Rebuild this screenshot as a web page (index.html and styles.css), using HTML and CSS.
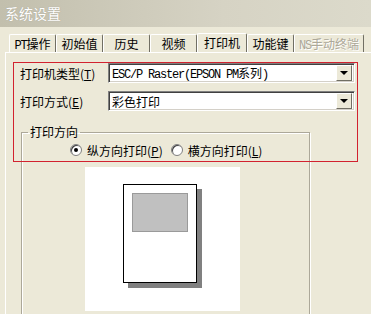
FILE: index.html
```html
<!DOCTYPE html>
<html lang="zh-CN">
<head>
    <meta charset="UTF-8">
    <title>系统设置</title>
    <link rel="stylesheet" href="styles.css">
</head>
<body>
    <div class="titlebar">系统设置</div>

    <div class="tabs">
        <div class="tab"><span class="latin">PT</span>操作</div>
        <div class="tab">初始值</div>
        <div class="tab">历史</div>
        <div class="tab">视频</div>
        <div class="tab active">打印机</div>
        <div class="tab">功能键</div>
        <div class="tab disabled"><span class="latin">NS</span>手动终端</div>
    </div>

    <div class="panel">
        <div class="row">
            <label>打印机类型(<u>T</u>)</label>
            <div class="combo">
                <span class="value"><span class="latin">ESC/P Raster(EPSON PM</span>系列<span class="latin">)</span></span>
                <span class="drop"><i></i></span>
            </div>
        </div>
        <div class="row">
            <label>打印方式(<u>E</u>)</label>
            <div class="combo">
                <span class="value">彩色打印</span>
                <span class="drop"><i></i></span>
            </div>
        </div>

        <fieldset class="group">
            <legend>打印方向</legend>
            <div class="radios">
                <span class="radio checked"></span>
                <span class="radio-label">纵方向打印(<u>P</u>)</span>
                <span class="radio"></span>
                <span class="radio-label">横方向打印(<u>L</u>)</span>
            </div>
            <div class="preview">
                <div class="paper">
                    <div class="image"></div>
                </div>
            </div>
        </fieldset>
    </div>

    <!-- annotation box -->
    <div class="mark"></div>
</body>
</html>
```

FILE: styles.css
```css
body {
    margin: 0;
    width: 371px;
    height: 314px;
    overflow: hidden;
    background: #ece9d8;
    font-family: "Noto Sans CJK SC", sans-serif;
    font-size: 12px;
    color: #000;
    position: relative;
}
.latin {
    font-family: "Liberation Mono", monospace;
    letter-spacing: -1.2px;
}
.titlebar {
    height: 27px;
    line-height: 26px;
    padding-left: 5px;
    font-size: 14px;
    color: #fff;
    text-shadow: 0 0 1px #9a978a;
    background: linear-gradient(to right, #c2bfad, #d6d3c4 60%, #dcdacb);
}
.tabs {
    display: flex;
    margin-top: 7px;
    padding-left: 9px;
    height: 18px;
    white-space: nowrap;
}
.tab {
    flex: none;
    box-sizing: border-box;
    min-width: 47px;
    padding: 0 4px;
    text-align: center;
    line-height: 17px;
    border-top: 1px solid #fff;
    border-left: 1px solid #fff;
    border-right: 1px solid #716f64;
    border-radius: 2px 2px 0 0;
}
.tab.active {
    margin-top: -1px;
    height: 19px;
    min-width: 50px;
}
.tab.disabled {
    color: #aca899;
    text-shadow: 1px 1px 0 #fff;
}
.panel {
    margin-left: 5px;
    border-top: 1px solid #fff;
    border-left: 1px solid #fff;
    padding-top: 10px;
    height: 251px;
    overflow: hidden;
}
.row {
    display: flex;
    align-items: center;
    height: 20px;
    padding-left: 14px;
    margin-bottom: 8px;
    white-space: nowrap;
}
.row label {
    width: 88px;
}
.combo {
    width: 247px;
    height: 20px;
    box-sizing: border-box;
    display: flex;
    align-items: center;
    background: #fff;
    border-top: 1px solid #808080;
    border-left: 1px solid #808080;
    border-right: 1px solid #fff;
    border-bottom: 1px solid #fff;
    box-shadow: inset 1px 1px 0 #404040, inset -1px -1px 0 #d4d0c8;
}
.combo .value {
    flex: 1;
    padding-left: 3px;
}
.drop {
    width: 16px;
    height: 16px;
    margin-right: 2px;
    box-sizing: border-box;
    display: flex;
    align-items: center;
    justify-content: center;
    background: #ece9d8;
    border-top: 1px solid #fff;
    border-left: 1px solid #fff;
    border-right: 1px solid #716f64;
    border-bottom: 1px solid #716f64;
}
.drop i {
    width: 0;
    height: 0;
    border-left: 4px solid transparent;
    border-right: 4px solid transparent;
    border-top: 4px solid #000;
}
.group {
    margin: 14px 0 0 15px;
    padding: 0;
    width: 287px;
    height: 260px;
    border: 1px solid #aca899;
    box-shadow: 1px 1px 0 #fff, inset 1px 1px 0 #fff;
}
.group legend {
    margin-left: 6px;
    padding: 0 2px;
    line-height: 14px;
}
.radios {
    display: flex;
    align-items: center;
    height: 14px;
    margin-top: 4px;
    padding-left: 48px;
    white-space: nowrap;
}
.radio {
    width: 12px;
    height: 12px;
    box-sizing: border-box;
    border-radius: 50%;
    background: #fff;
    border: 1px solid #808080;
    box-shadow: inset 1px 1px 0 #404040;
    display: flex;
    align-items: center;
    justify-content: center;
}
.radio.checked::after {
    content: "";
    width: 4px;
    height: 4px;
    border-radius: 50%;
    background: #000;
}
.radio-label {
    margin: 0 8px 0 5px;
}
.preview {
    width: 155px;
    height: 144px;
    margin: 10px 0 0 63px;
    background: #fff;
    padding: 17px 0 0 38px;
    box-sizing: border-box;
}
.paper {
    width: 74px;
    height: 99px;
    box-sizing: border-box;
    border: 1px solid #000;
    background: #fff;
    box-shadow: 5px 5px 0 #808080;
    padding: 8px 0 0 8px;
}
.image {
    width: 56px;
    height: 39px;
    box-sizing: border-box;
    background: #c0c0c0;
    border: 1px solid #9a9a9a;
}
.mark {
    position: absolute;
    left: 13px;
    top: 62px;
    width: 345px;
    height: 100px;
    box-sizing: border-box;
    border: 1px solid #d2222f;
}
```
